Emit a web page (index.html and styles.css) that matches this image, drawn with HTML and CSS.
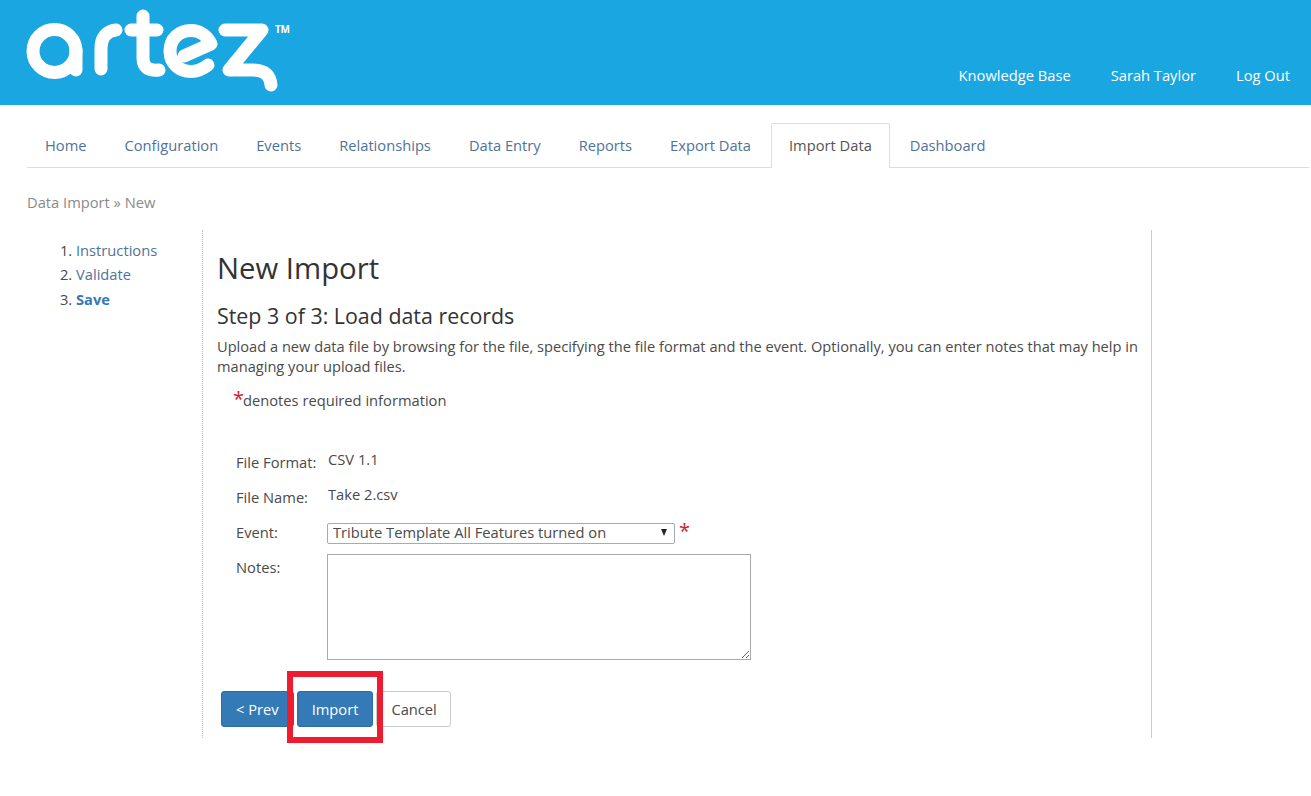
FILE: index.html
```html
<!DOCTYPE html>
<html lang="en">
<head>
<meta charset="utf-8">
<title>New Import</title>
<link rel="stylesheet" href="styles.css">
</head>
<body>
<header class="site-header">
  <a class="logo" href="#" aria-label="artez">
    <svg class="logo-mark" width="300" height="105" viewBox="0 0 300 105" fill="none" stroke="#fff" stroke-width="13" stroke-linecap="round" stroke-linejoin="round">
      <circle cx="54.500" cy="51" r="21.500"/>
      <path d="M76 50V70"/>
      <path d="M101 69V48C101 37 107 31 116 30"/>
      <path d="M143 16V58C143 67 148 71 159 70"/>
      <path d="M131 30H157"/>
      <path d="M184 56L211 44C207 35 199 30.500 191 30.500C179 30.500 170 39 170 51C170 63 179 71.500 191 71.500C198 71.500 203 69 208 65"/>
      <path d="M225 30H262L229 70H252C264 70 270 75 271 85"/>
    </svg>
    <span class="tm">TM</span>
  </a>
  <nav class="user-nav">
    <a href="#">Knowledge Base</a>
    <a href="#">Sarah Taylor</a>
    <a href="#">Log Out</a>
  </nav>
</header>

<nav class="tabs">
  <a class="tab" href="#">Home</a>
  <a class="tab" href="#">Configuration</a>
  <a class="tab" href="#">Events</a>
  <a class="tab" href="#">Relationships</a>
  <a class="tab" href="#">Data Entry</a>
  <a class="tab" href="#">Reports</a>
  <a class="tab" href="#">Export Data</a>
  <a class="tab tab-active" href="#">Import Data</a>
  <a class="tab" href="#">Dashboard</a>
</nav>

<div class="breadcrumb">Data Import » New</div>

<div class="page">
  <ol class="steps">
    <li><a href="#">Instructions</a></li>
    <li><a href="#">Validate</a></li>
    <li><a class="step-current" href="#">Save</a></li>
  </ol>
  <main class="content">
    <h1>New Import</h1>
    <h2>Step 3 of 3: Load data records</h2>
    <p class="intro">Upload a new data file by browsing for the file, specifying the file format and the event. Optionally, you can enter notes that may help in managing your upload files.</p>
    <p class="required-note"><span class="star star-note">*</span>denotes required information</p>
    <form class="form">
      <div class="row row-format"><span class="label">File Format:</span><span class="value">CSV 1.1</span></div>
      <div class="row row-name"><span class="label">File Name:</span><span class="value">Take 2.csv</span></div>
      <div class="row row-event">
        <label class="label" for="event">Event:</label>
        <span class="select-wrap">
          <select id="event" class="select"><option>Tribute Template All Features turned on</option></select>
        </span>
        <span class="star star-field">*</span>
      </div>
      <div class="row row-notes">
        <label class="label" for="notes">Notes:</label>
        <textarea id="notes" class="notes"></textarea>
      </div>
      <div class="actions">
        <button type="button" class="btn btn-primary">&lt; Prev</button>
        <span class="highlight"><button type="button" class="btn btn-primary">Import</button></span>
        <button type="button" class="btn btn-default">Cancel</button>
      </div>
    </form>
  </main>
</div>
</body>
</html>
```
FILE: styles.css
```css
* { box-sizing: border-box; }
html, body { margin: 0; padding: 0; }
body {
  font-family: "Open Sans", "Liberation Sans", sans-serif;
  font-size: 14.7px;
  line-height: 20px;
  color: #4a4a4a;
  background: #fff;
  height: 796px;
  overflow: hidden;
}
a { text-decoration: none; }

.site-header {
  height: 105px;
  background: #1aa6e0;
  display: flex;
  justify-content: space-between;
  align-items: flex-end;
}
.logo { position: relative; display: block; width: 300px; height: 105px; }
.logo-mark { display: block; }
.tm {
  position: absolute;
  left: 275px;
  top: 24px;
  font-size: 10px;
  line-height: 11px;
  font-weight: 700;
  letter-spacing: -0.3px;
  color: #fff;
}
.user-nav { display: flex; gap: 40px; padding: 0 21px 20px 0; }
.user-nav a { color: #fff; }

.tabs {
  display: flex;
  height: 45px;
  margin: 18px 2px 0 27px;
  border-bottom: 1px solid #ddd;
}
.tab {
  display: block;
  height: 45px;
  padding: 11px 17px 0;
  margin-right: 2px;
  color: #4f7399;
  border: 1px solid transparent;
  border-bottom: 0;
}
.tab-active {
  color: #555;
  background: #fff;
  border-color: #ddd;
  border-radius: 2px 2px 0 0;
}

.breadcrumb { margin: 24px 0 0 27px; color: #8a8a8a; }

.page { display: flex; margin: 18px 0 0 0; }
.steps {
  width: 203px;
  margin: 0;
  padding: 7.700px 0 0 76px;
  border-right: 1px dotted #bbb;
  line-height: 24.500px;
}
.steps a { color: #4f7399; }
.steps .step-current { color: #337ab7; font-weight: 700; }

.content {
  width: 949px;
  height: 508px;
  padding: 0 4px 0 14px;
  border-right: 1px solid #ccc;
}
h1 { margin: 19px 0 0; font-size: 29.300px; line-height: 38px; font-weight: 400; color: #333; }
h2 { margin: 16px 0 0; font-size: 21.400px; line-height: 26px; font-weight: 400; color: #333; }
.intro { margin: 7px 0 0; font-size: 14.640px; }
.required-note { margin: 12px 0 0 16px; line-height: 24px; }
.star { color: #c9202f; font-size: 20px; line-height: 20px; }
.star-note { margin-right: -1px; }

.form { margin: 0 0 0 19px; }
.row { display: flex; align-items: flex-start; }
.label { width: 91px; flex: none; }
.value { padding-left: 1px; }
.row-format { margin-top: 37px; height: 35px; }
.row-format .label { padding-top: 3px; }
.row-name { height: 35px; }
.row-name .label { padding-top: 3px; }
.row-event { height: 21px; margin-top: 4px; }
.row-event .label { margin-top: -1px; }
.select-wrap { position: relative; display: block; width: 348px; height: 21px; }
.select-wrap::after {
  content: "";
  position: absolute;
  right: 8px;
  top: 6px;
  border-left: 3.500px solid transparent;
  border-right: 3.500px solid transparent;
  border-top: 7px solid #222;
  pointer-events: none;
}
.select {
  display: block;
  width: 348px;
  height: 21px;
  padding: 0 0 2px 5px;
  font: 14.7px/17px "Open Sans", "Liberation Sans", sans-serif;
  color: #4a4a4a;
  background: #fff;
  border: 1px solid #aaa;
  border-radius: 2px;
  appearance: none;
}
.star-field { margin: -2px 0 0 4px; }
.row-notes { margin-top: 10px; }
.row-notes .label { padding-top: 3px; }
.notes {
  display: block;
  width: 424px;
  height: 106px;
  border: 1px solid #aaa;
  border-radius: 0;
  background: #fff;
}

.actions { display: flex; gap: 3px; margin: 31px 0 0 -15px; }
.btn {
  display: block;
  height: 36px;
  padding: 0 14px;
  font: 14.7px "Open Sans", "Liberation Sans", sans-serif;
  border: 1px solid transparent;
  border-radius: 3px;
}
.btn-primary { color: #fff; background: #337ab7; border-color: #2e6da4; }
.btn-default { width: 75px; color: #4a4a4a; background: #fff; border-color: #ccc; }
.highlight { position: relative; display: block; }
.highlight::after {
  content: "";
  position: absolute;
  left: -10px;
  right: -10px;
  top: -20px;
  bottom: -16px;
  border: 6px solid #ed1c2e;
  z-index: 1;
  pointer-events: none;
}
```
